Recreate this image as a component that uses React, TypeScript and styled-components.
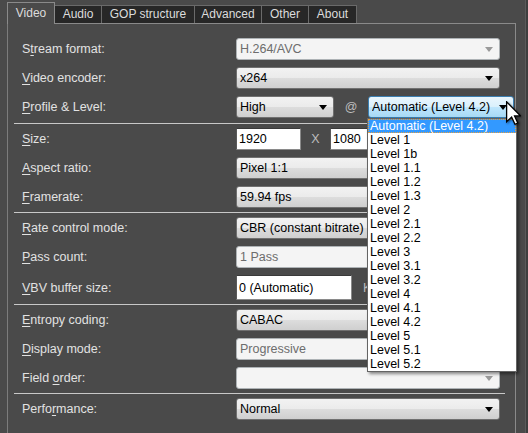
import { FC } from 'react'
import styled, { createGlobalStyle, css } from 'styled-components'

const GlobalStyle = createGlobalStyle`
  html, body {
    margin: 0;
    padding: 0;
    background: #4a4a4a;
  }
  body {
    font-family: 'Liberation Sans', Arial, sans-serif;
    font-size: 12.5px;
  }
`

const LEVELS = [
  'Automatic (Level 4.2)',
  'Level 1',
  'Level 1b',
  'Level 1.1',
  'Level 1.2',
  'Level 1.3',
  'Level 2',
  'Level 2.1',
  'Level 2.2',
  'Level 3',
  'Level 3.1',
  'Level 3.2',
  'Level 4',
  'Level 4.1',
  'Level 4.2',
  'Level 5',
  'Level 5.1',
  'Level 5.2',
]

// tab caption + its width in the strip
const TABS: [string, number][] = [
  ['Video', 48],
  ['Audio', 47],
  ['GOP structure', 93],
  ['Advanced', 67],
  ['Other', 47],
  ['About', 48],
]

// label text + index of the underlined access key
type LabelProps = { text: string; keyAt: number }

const AccessLabel: FC<LabelProps> = ({ text, keyAt }) => (
  <Label>
    {text.slice(0, keyAt)}
    <u>{text[keyAt]}</u>
    {text.slice(keyAt + 1)}
  </Label>
)

type ComboProps = {
  value?: string
  disabled?: boolean
  hot?: boolean
  width?: number
}

const Combo: FC<ComboProps> = ({ value = '', disabled, hot, width }) => (
  <ComboBox $disabled={disabled} $hot={hot} $width={width}>
    <ComboText>{value}</ComboText>
    <Arrow $disabled={disabled} />
  </ComboBox>
)

const App: FC = () => {
  return (
    <>
      <GlobalStyle />
      <Root>
        <Main>
          <TabBar>
            {TABS.map(([t, w], i) => (
              <Tab key={t} $active={i === 0} $width={w}>
                {t}
              </Tab>
            ))}
          </TabBar>

          <Pane>
            <Section $first>
              <Row>
                <AccessLabel text="Stream format:" keyAt={1} />
                <Combo value="H.264/AVC" disabled />
              </Row>
              <Row>
                <AccessLabel text="Video encoder:" keyAt={0} />
                <Combo value="x264" />
              </Row>
              <Row>
                <AccessLabel text="Profile & Level:" keyAt={0} />
                <Controls>
                  <Combo value="High" width={98} />
                  <Glue $width={34}>@</Glue>
                  <Popup>
                    <Combo value="Automatic (Level 4.2)" hot width={146} />
                    <DropList>
                      {LEVELS.map((l, i) => (
                        <DropItem key={l} $selected={i === 0}>
                          {l}
                        </DropItem>
                      ))}
                    </DropList>
                  </Popup>
                </Controls>
              </Row>
            </Section>

            <Separator />

            <Section>
              <Row>
                <AccessLabel text="Size:" keyAt={0} />
                <Controls>
                  <TextBox $width={65}>1920</TextBox>
                  <Glue $width={29}>X</Glue>
                  <TextBox $width={65}>1080</TextBox>
                </Controls>
              </Row>
              <Row>
                <AccessLabel text="Aspect ratio:" keyAt={0} />
                <Combo value="Pixel 1:1" />
              </Row>
              <Row>
                <AccessLabel text="Framerate:" keyAt={0} />
                <Combo value="59.94 fps" />
              </Row>
            </Section>

            <Separator />

            <Section>
              <Row>
                <AccessLabel text="Rate control mode:" keyAt={0} />
                <Combo value="CBR (constant bitrate)" />
              </Row>
              <Row>
                <AccessLabel text="Pass count:" keyAt={0} />
                <Combo value="1 Pass" disabled />
              </Row>
              <Row $tall>
                <AccessLabel text="VBV buffer size:" keyAt={0} />
                <Controls>
                  <TextBox $width={116} $tall>
                    0 (Automatic)
                  </TextBox>
                  <Unit>Kbps</Unit>
                </Controls>
              </Row>
            </Section>

            <Separator />

            <Section>
              <Row>
                <AccessLabel text="Entropy coding:" keyAt={0} />
                <Combo value="CABAC" />
              </Row>
              <Row>
                <AccessLabel text="Display mode:" keyAt={0} />
                <Combo value="Progressive" disabled />
              </Row>
              <Row>
                <AccessLabel text="Field order:" keyAt={6} />
                <Combo disabled />
              </Row>
            </Section>

            <Separator />

            <Section>
              <Row>
                <AccessLabel text="Performance:" keyAt={5} />
                <Combo value="Normal" />
              </Row>
            </Section>
          </Pane>
        </Main>

        <SideStrip />

        <Cursor width="15" height="24" viewBox="0 0 12 19">
          <path
            d="M0.5 0.5 L0.5 16.5 L4.5 12.8 L7.2 18.5 L9.4 17.5 L6.8 11.8 L11.5 11.8 Z"
            fill="#fff"
            stroke="#000"
            strokeWidth="1"
            strokeLinejoin="miter"
          />
        </Cursor>
      </Root>
    </>
  )
}

const Root = styled.div`
  position: relative;
  width: 528px;
  height: 433px;
  overflow: hidden;
  display: flex;
  background: #4a4a4a;
`

const Main = styled.div`
  width: 516px;
  display: flex;
  flex-direction: column;
  padding-left: 7px;
  padding-top: 2px;
  box-sizing: border-box;
`

const SideStrip = styled.div`
  flex: 1;
  border-right: 2px solid #3e3e3e;
  box-shadow: inset -1px 0 0 #5a5a5a;
`

const TabBar = styled.div`
  display: flex;
  align-items: flex-end;
  height: 21px;
  position: relative;
  z-index: 1;
`

const Tab = styled.div<{ $active?: boolean; $width: number }>`
  box-sizing: border-box;
  width: ${(p) => p.$width}px;
  flex-shrink: 0;
  height: 18px;
  line-height: 17px;
  text-align: center;
  font-size: 12px;
  color: #dcdcdc;
  background: #272727;
  border: 1px solid #6a6a6a;
  border-bottom: none;
  border-left: none;
  white-space: nowrap;

  ${(p) =>
    p.$active &&
    css`
      height: 22px;
      line-height: 21px;
      margin-bottom: -1px;
      background: #4a4a4a;
      border: 1px solid #8a8a8a;
      border-bottom: none;
    `}
`

const Pane = styled.div`
  flex: 1;
  border: 1px solid #8a8a8a;
  border-left-color: #7c7c7c;
  border-bottom: none;
  padding: 0 14px 0 14px;
  display: flex;
  flex-direction: column;
`

const Section = styled.div<{ $first?: boolean }>`
  display: flex;
  flex-direction: column;
  gap: 7px;
  padding: ${(p) => (p.$first ? '14px 0 5px' : '4px 0 4px')};
`

const Separator = styled.div`
  height: 1px;
  margin: 0 -4px 0 -8px;
  background: #c8c8c8;
`

const Row = styled.div<{ $tall?: boolean }>`
  display: grid;
  grid-template-columns: 214px 264px;
  align-items: center;
  height: ${(p) => (p.$tall ? 25 : 22)}px;
`

const Label = styled.span`
  color: #e2e2e2;
  white-space: nowrap;

  u {
    text-decoration-thickness: 1px;
    text-underline-offset: 2px;
  }
`

const Controls = styled.div`
  display: flex;
  align-items: center;
  height: 100%;
  min-width: 0;
`

const Glue = styled.span<{ $width: number }>`
  width: ${(p) => p.$width}px;
  flex-shrink: 0;
  text-align: center;
  color: #bdbdbd;
`

const Unit = styled.span`
  flex-shrink: 0;
  margin-left: 11px;
  color: #bdbdbd;
`

const ComboBox = styled.div<{ $disabled?: boolean; $hot?: boolean; $width?: number }>`
  box-sizing: border-box;
  width: ${(p) => (p.$width ? `${p.$width}px` : '100%')};
  flex-shrink: 0;
  height: 22px;
  display: flex;
  align-items: center;
  padding: 0 5px 0 3px;
  border-radius: 3px;
  border: 1px solid #707070;
  background: linear-gradient(#f2f2f2 0%, #ebebeb 50%, #dddddd 50%, #cfcfcf 100%);
  color: #000;

  ${(p) =>
    p.$disabled &&
    css`
      border-color: #adb2b5;
      background: #f4f4f4;
      color: #6d6d6d;
    `}

  ${(p) =>
    p.$hot &&
    css`
      border-color: #3c7fb1;
      background: linear-gradient(#eaf6fd 0%, #d9f0fc 50%, #bee6fd 50%, #a7d9f5 100%);
    `}
`

const ComboText = styled.span`
  flex: 1;
  white-space: nowrap;
  overflow: hidden;
`

const Arrow = styled.span<{ $disabled?: boolean }>`
  width: 0;
  height: 0;
  border-left: 4px solid transparent;
  border-right: 4px solid transparent;
  border-top: 5px solid ${(p) => (p.$disabled ? '#9a9a9a' : '#000')};
  margin-right: 1px;
`

const TextBox = styled.div<{ $width: number; $tall?: boolean }>`
  box-sizing: border-box;
  width: ${(p) => p.$width}px;
  flex-shrink: 0;
  height: ${(p) => (p.$tall ? 25 : 22)}px;
  display: flex;
  align-items: center;
  padding-left: 2px;
  background: #fff;
  border: 1px solid #8a8a8a;
  border-top-color: #3a3a3a;
  border-left-color: #5a5a5a;
  color: #000;
`

const Popup = styled.div`
  position: relative;
  flex-shrink: 0;
  z-index: 5;
`

const DropList = styled.div`
  position: absolute;
  top: 22px;
  left: -1px;
  width: 150px;
  box-sizing: border-box;
  background: #fff;
  border: 1px solid #646464;
  box-shadow: 2px 2px 3px rgba(0, 0, 0, 0.45);
`

const DropItem = styled.div<{ $selected?: boolean }>`
  height: 14px;
  line-height: 14px;
  padding-left: 2px;
  color: #000;
  white-space: nowrap;

  ${(p) =>
    p.$selected &&
    css`
      background: #3399ff;
      color: #fff;
      outline: 1px dotted #e8a040;
      outline-offset: -1px;
    `}
`

const Cursor = styled.svg`
  position: absolute;
  left: 506px;
  top: 101px;
  z-index: 10;
  filter: drop-shadow(1px 1px 1px rgba(0, 0, 0, 0.5));
`

export default App
